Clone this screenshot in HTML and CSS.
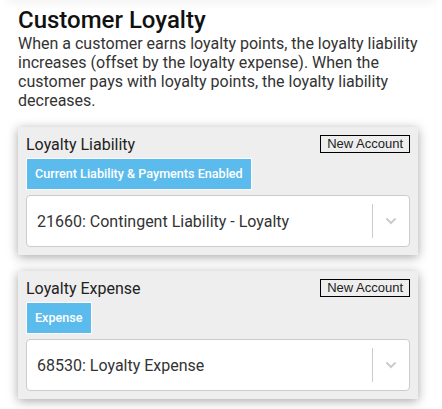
FILE: index.html
```html
<!DOCTYPE html>
<html>
<head>
<meta charset="utf-8">
<link rel="stylesheet" href="styles.css">
</head>
<body>
<div class="top-shade"></div>
<main class="page">
  <h1 class="title">Customer Loyalty</h1>
  <p class="desc">When a customer earns loyalty points, the loyalty liability increases (offset by the loyalty expense). When the customer pays with loyalty points, the loyalty liability decreases.</p>

  <section class="card">
    <div class="card-head">
      <span class="label">Loyalty Liability</span>
      <span class="new-btn">New Account</span>
    </div>
    <div class="badges"><span class="badge">Current Liability &amp; Payments Enabled</span></div>
    <div class="select">
      <span class="select-value">21660: Contingent Liability - Loyalty</span>
      <span class="select-sep"></span>
      <span class="select-arrow"><svg width="12" height="8" viewBox="0 0 12 8"><path d="M1.5 1.5 L6 6 L10.5 1.5" fill="none" stroke="#cccccc" stroke-width="2"/></svg></span>
    </div>
  </section>

  <section class="card">
    <div class="card-head">
      <span class="label">Loyalty Expense</span>
      <span class="new-btn">New Account</span>
    </div>
    <div class="badges"><span class="badge">Expense</span></div>
    <div class="select">
      <span class="select-value">68530: Loyalty Expense</span>
      <span class="select-sep"></span>
      <span class="select-arrow"><svg width="12" height="8" viewBox="0 0 12 8"><path d="M1.5 1.5 L6 6 L10.5 1.5" fill="none" stroke="#cccccc" stroke-width="2"/></svg></span>
    </div>
  </section>
</main>
</body>
</html>
```
FILE: styles.css
```css
html, body {
  margin: 0;
  padding: 0;
  background: #ffffff;
  font-family: Roboto, "Liberation Sans", sans-serif;
  color: #333333;
}
.top-shade {
  height: 0;
  box-shadow: 0 0 8px 1px rgba(0,0,0,0.18);
  margin: 0 8px;
}
.page {
  padding: 6px 24px 0 18px;
}
.title {
  margin: 0;
  font-size: 24px;
  line-height: 28px;
  font-weight: 500;
  color: #111111;
}
.desc {
  margin: 0 0 17px 0;
  font-size: 16px;
  line-height: 19px;
  color: #333333;
}
.card {
  background: #eeeeee;
  box-shadow: 0 2px 10px rgba(0,0,0,0.35);
  padding: 8px 8px 8px 8px;
  margin-bottom: 16px;
}
.card-head {
  display: flex;
  justify-content: space-between;
  align-items: center;
  height: 18px;
}
.label {
  font-size: 16px;
  color: #222222;
}
.new-btn {
  border: 1px solid #000000;
  font-size: 13px;
  line-height: 16px;
  padding: 0 6px;
  color: #222222;
  font-family: "Liberation Sans", Arial, sans-serif;
}
.badges {
  display: flex;
  margin-top: 5px;
}
.badge {
  background: #5bbbec;
  color: #ffffff;
  border: 1px solid #ffffff;
  font-size: 12.6px;
  font-weight: 500;
  line-height: 30px;
  padding: 0 8px;
}
.select {
  margin-top: 5px;
  background: #ffffff;
  border: 1px solid #cccccc;
  border-radius: 4px;
  height: 50px;
  display: flex;
  align-items: center;
}
.select-value {
  flex: 1;
  padding-left: 10px;
  font-size: 16px;
  color: #333333;
}
.select-sep {
  width: 1px;
  height: 34px;
  background: #cccccc;
}
.select-arrow {
  width: 36px;
  display: flex;
  justify-content: center;
  align-items: center;
}
```
